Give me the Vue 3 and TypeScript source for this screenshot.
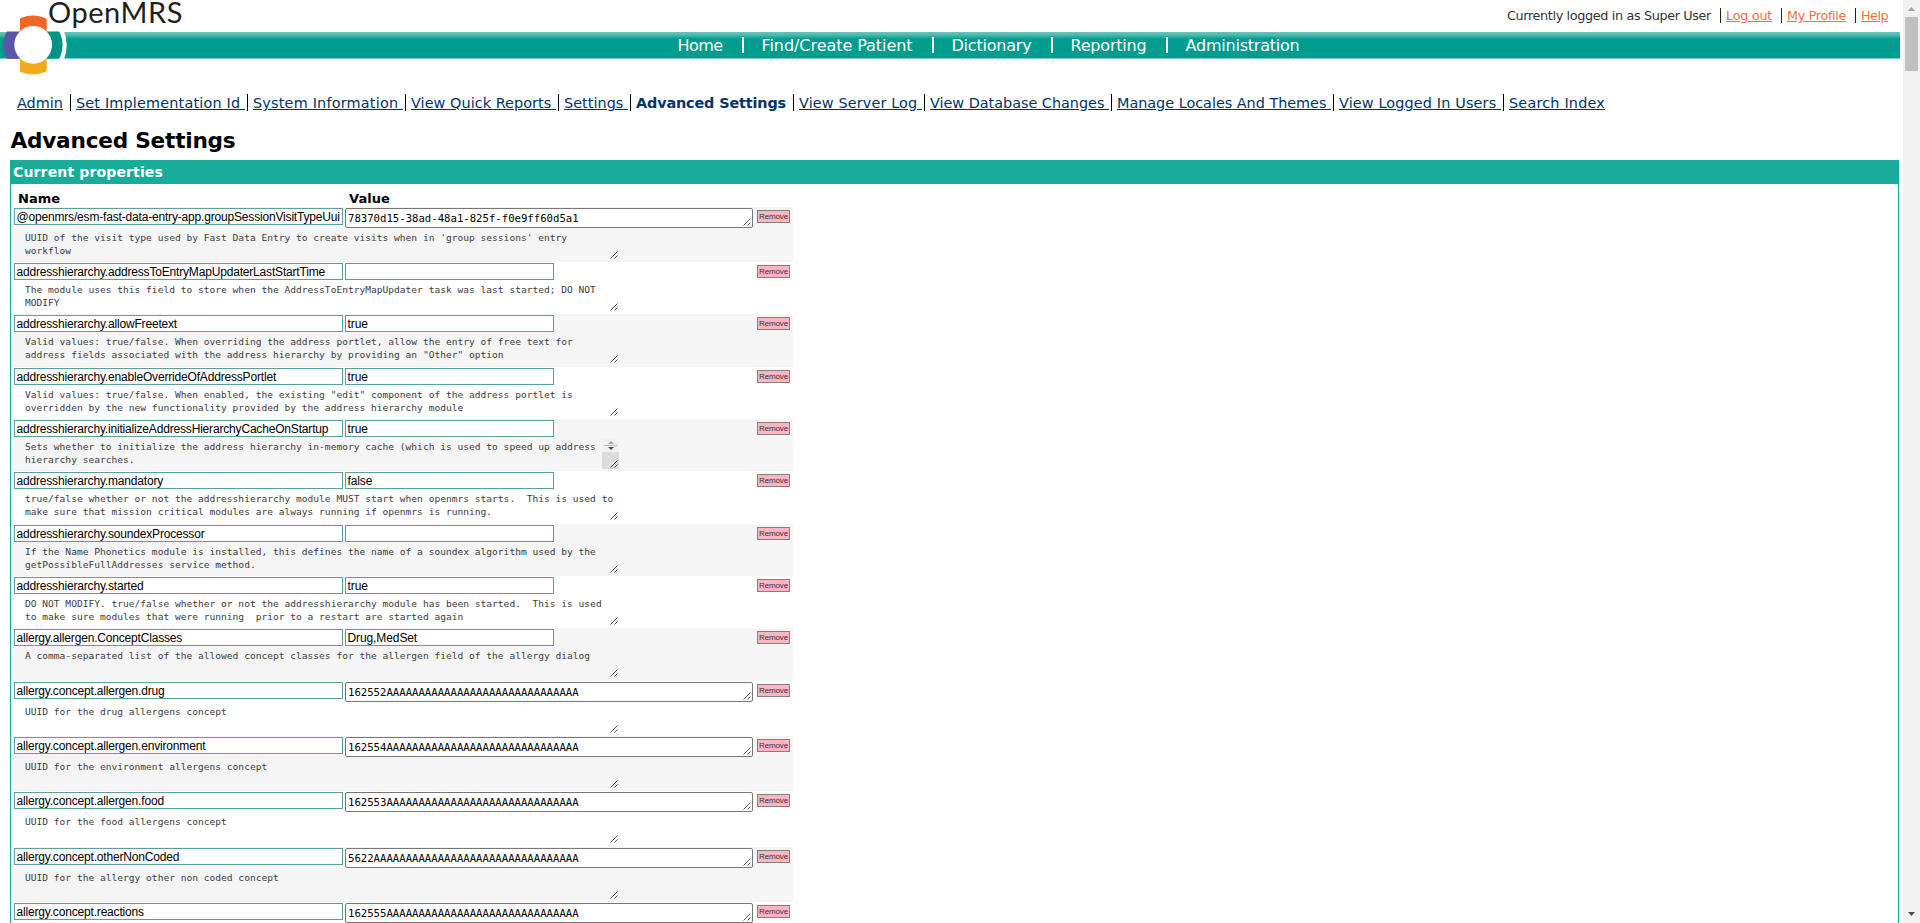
<script setup lang="ts">
interface Label { text: string; width: number }
interface Tab extends Label { spaced?: boolean; current?: boolean }
interface Property {
  name: string
  value: string
  long?: boolean
  description: string[]
  height: number
  scroll?: boolean
}

// Spreads a label evenly over the given width by adjusting its letter spacing.
const vFit = {
  mounted(el: HTMLElement, binding: { value: number }) {
    const natural = el.getBoundingClientRect().width
    const count = (el.textContent ?? '').length
    if (count > 0) el.style.letterSpacing = `${(binding.value - natural) / count}px`
  },
}

const account: Label[] = [
  { text: 'Log out', width: 46 },
  { text: 'My Profile', width: 59 },
  { text: 'Help', width: 27 },
]

const navigation: Label[] = [
  { text: 'Home', width: 45 },
  { text: 'Find/Create Patient', width: 151 },
  { text: 'Dictionary', width: 80 },
  { text: 'Reporting', width: 76 },
  { text: 'Administration', width: 114 },
]

const tabs: Tab[] = [
  { text: 'Admin', width: 46, spaced: true },
  { text: 'Set Implementation Id\u00a0', width: 169 },
  { text: 'System Information\u00a0', width: 150 },
  { text: 'View Quick Reports\u00a0', width: 145 },
  { text: 'Settings\u00a0', width: 64 },
  { text: 'Advanced Settings', width: 150, spaced: true, current: true },
  { text: 'View Server Log\u00a0', width: 123 },
  { text: 'View Database Changes\u00a0', width: 179 },
  { text: 'Manage Locales And Themes\u00a0', width: 214 },
  { text: 'View Logged In Users\u00a0', width: 162 },
  { text: 'Search Index', width: 96 },
]

const properties: Property[] = [
  {
    name: '@openmrs/esm-fast-data-entry-app.groupSessionVisitTypeUui',
    value: '78370d15-38ad-48a1-825f-f0e9ff60d5a1', long: true, height: 55,
    description: ["UUID of the visit type used by Fast Data Entry to create visits when in 'group sessions' entry", 'workflow'],
  },
  {
    name: 'addresshierarchy.addressToEntryMapUpdaterLastStartTime', value: '', height: 52,
    description: ['The module uses this field to store when the AddressToEntryMapUpdater task was last started; DO NOT', 'MODIFY'],
  },
  {
    name: 'addresshierarchy.allowFreetext', value: 'true', height: 53,
    description: ['Valid values: true/false. When overriding the address portlet, allow the entry of free text for', 'address fields associated with the address hierarchy by providing an "Other" option'],
  },
  {
    name: 'addresshierarchy.enableOverrideOfAddressPortlet', value: 'true', height: 52,
    description: ['Valid values: true/false. When enabled, the existing "edit" component of the address portlet is', 'overridden by the new functionality provided by the address hierarchy module'],
  },
  {
    name: 'addresshierarchy.initializeAddressHierarchyCacheOnStartup', value: 'true', height: 52, scroll: true,
    description: ['Sets whether to initialize the address hierarchy in-memory cache (which is used to speed up address', 'hierarchy searches.'],
  },
  {
    name: 'addresshierarchy.mandatory', value: 'false', height: 53,
    description: ['true/false whether or not the addresshierarchy module MUST start when openmrs starts.  This is used to', 'make sure that mission critical modules are always running if openmrs is running.'],
  },
  {
    name: 'addresshierarchy.soundexProcessor', value: '', height: 52,
    description: ['If the Name Phonetics module is installed, this defines the name of a soundex algorithm used by the', 'getPossibleFullAddresses service method.'],
  },
  {
    name: 'addresshierarchy.started', value: 'true', height: 52,
    description: ['DO NOT MODIFY. true/false whether or not the addresshierarchy module has been started.  This is used', 'to make sure modules that were running  prior to a restart are started again'],
  },
  {
    name: 'allergy.allergen.ConceptClasses', value: 'Drug,MedSet', height: 53,
    description: ['A comma-separated list of the allowed concept classes for the allergen field of the allergy dialog'],
  },
  { name: 'allergy.concept.allergen.drug', value: '162552AAAAAAAAAAAAAAAAAAAAAAAAAAAAAA', long: true, height: 55, description: ['UUID for the drug allergens concept'] },
  { name: 'allergy.concept.allergen.environment', value: '162554AAAAAAAAAAAAAAAAAAAAAAAAAAAAAA', long: true, height: 55, description: ['UUID for the environment allergens concept'] },
  { name: 'allergy.concept.allergen.food', value: '162553AAAAAAAAAAAAAAAAAAAAAAAAAAAAAA', long: true, height: 56, description: ['UUID for the food allergens concept'] },
  { name: 'allergy.concept.otherNonCoded', value: '5622AAAAAAAAAAAAAAAAAAAAAAAAAAAAAAAA', long: true, height: 55, description: ['UUID for the allergy other non coded concept'] },
  { name: 'allergy.concept.reactions', value: '162555AAAAAAAAAAAAAAAAAAAAAAAAAAAAAA', long: true, height: 55, description: [] },
]
</script>

<template>
  <div class="window">
    <div class="page">
      <header class="banner">
        <div class="account">
          <span v-fit="204">Currently logged in as Super User</span>
          <template v-for="item in account" :key="item.text">
            <i class="rule"></i><a v-fit="item.width">{{ item.text }}</a>
          </template>
        </div>
        <nav class="navbar">
          <template v-for="(item, i) in navigation" :key="item.text">
            <i v-if="i > 0" class="rule"></i><a v-fit="item.width">{{ item.text }}</a>
          </template>
        </nav>
        <svg class="mark" width="70" height="80" viewBox="0 0 70 80">
          <defs><clipPath id="disc"><circle cx="33" cy="45" r="29.6" /></clipPath></defs>
          <path d="M50 31.5 H64 Q69.5 45 64 59.2 H50 Z" fill="#fff" />
          <g clip-path="url(#disc)">
            <rect x="20" y="10" width="26.7" height="28" fill="#f26522" />
            <rect x="20" y="50" width="26.7" height="28" fill="#f0ab18" />
            <rect x="0" y="31.5" width="26" height="27.3" fill="#5b57a6" />
            <rect x="40" y="31.5" width="26" height="27.3" fill="#009384" />
          </g>
          <circle cx="33.2" cy="44.8" r="18.9" fill="#fff" />
        </svg>
        <span class="wordmark" v-fit="135">OpenMRS</span>
      </header>

      <nav class="tabs">
        <template v-for="(tab, i) in tabs" :key="tab.text">
          <i v-if="i > 0" class="rule"></i>
          <a v-fit="tab.width" :class="{ spaced: tab.spaced, current: tab.current }">{{ tab.text }}</a>
        </template>
      </nav>

      <h2><span v-fit="225">Advanced Settings</span></h2>

      <section class="box">
        <div class="box-title"><span v-fit="150">Current properties</span></div>
        <div class="heads"><b><span v-fit="42">Name</span></b><b><span v-fit="41">Value</span></b></div>
        <div
          v-for="(p, i) in properties"
          :key="p.name"
          class="row"
          :class="{ shaded: i % 2 === 0, tall: p.long }"
          :style="{ height: p.height + 'px' }"
        >
          <div class="fields">
            <div class="field name">{{ p.name }}</div>
            <div v-if="p.long" class="area">{{ p.value }}
              <svg class="grip" width="8" height="8" viewBox="0 0 8 8"><path d="M0.5 7.5 L7.5 0.5 M4.5 7.5 L7.5 4.5" /></svg>
            </div>
            <div v-else class="field value">{{ p.value }}</div>
            <button class="remove" type="button"><span v-fit="29">Remove</span></button>
          </div>
          <div class="note">
            <div v-for="line in p.description" :key="line" class="line">{{ line }}</div>
            <svg v-if="p.scroll" class="scroller" width="17" height="30" viewBox="0 0 17 30">
              <rect width="17" height="30" fill="#f1f1f1" />
              <rect y="13" width="17" height="17" fill="#dcdcdc" />
              <path d="M6 5 L9 2 L12 5 Z" fill="#a3a3a3" />
              <path d="M2 6.5 H15" stroke="#b8b8b8" />
              <path d="M6 8 H12 L9 11 Z" fill="#505050" />
            </svg>
            <svg class="grip" width="8" height="8" viewBox="0 0 8 8"><path d="M0.5 7.5 L7.5 0.5 M4.5 7.5 L7.5 4.5" /></svg>
          </div>
        </div>
      </section>
    </div>

    <aside class="scrollbar">
      <svg width="17" height="17" viewBox="0 0 17 17"><path d="M5 11 L8.5 7 L12 11 Z" fill="#a3a3a3" /></svg>
      <div class="thumb"></div>
      <svg class="down" width="17" height="17" viewBox="0 0 17 17"><path d="M5 6 H12 L8.5 10 Z" fill="#505050" /></svg>
    </aside>
  </div>
</template>

<style>
html,
body {
  margin: 0;
  background: #fff;
  overflow: hidden;
}
</style>

<style scoped>
.window {
  display: flex;
  width: 1920px;
  height: 923px;
  overflow: hidden;
  font-family: Verdana, "DejaVu Sans", sans-serif;
  color: #000;
}
.page {
  width: 1903px;
  height: 923px;
  overflow: hidden;
  flex: none;
}
a,
span {
  white-space: pre;
}
.banner {
  position: relative;
  height: 80px;
}
.account {
  display: flex;
  justify-content: flex-end;
  box-sizing: border-box;
  height: 32px;
  padding: 8px 15px 0 0;
  font-size: 12.8px;
  line-height: 16px;
  color: #333;
}
.account .rule {
  width: 1px;
  height: 15px;
  margin: 0 5px 0 9px;
  background: #222;
}
.account a {
  color: #f26f43;
  text-decoration: underline;
}
.navbar {
  display: flex;
  box-sizing: border-box;
  width: 1900px;
  height: 27px;
  padding-left: 677.5px;
  background: linear-gradient(#6ac5ba 0, #4fb9ad 3px, #009d8e 7px, #009d8e 26px, #7fc9c1 26px);
  color: #fff;
  font-size: 16px;
  line-height: 27px;
}
.navbar .rule {
  width: 2px;
  height: 16px;
  margin: 5px 18px 0 19px;
  background: #fff;
}
.mark {
  position: absolute;
  left: 0;
  top: 0;
}
.wordmark {
  position: absolute;
  left: 48px;
  top: 0;
  font: 29px/24px Lato, sans-serif;
  color: #231f20;
}
.tabs {
  display: flex;
  box-sizing: border-box;
  height: 46px;
  padding: 14px 0 0 17px;
  font-size: 14.4px;
  line-height: 18px;
}
.tabs .rule {
  width: 1px;
  height: 17px;
  margin: 0 5px 0 2px;
  background: #000;
}
.tabs a {
  color: #036;
  text-decoration: underline;
}
.tabs .spaced {
  margin-right: 5px;
}
.tabs .current {
  font-weight: bold;
  text-decoration: none;
}
h2 {
  height: 34px;
  margin: 0;
  padding-left: 10.5px;
  font-size: 21.6px;
  line-height: 29px;
}
.box {
  box-sizing: border-box;
  width: 1889px;
  margin-left: 10px;
  border: 1px solid #1aac9b;
  border-top: 0;
}
.box-title {
  height: 24px;
  padding-left: 2px;
  background: #1aac9b;
  color: #fff;
  font-size: 14px;
  font-weight: bold;
  line-height: 24px;
}
.heads {
  display: flex;
  height: 23px;
  padding-left: 7px;
  font-size: 13px;
  line-height: 29px;
}
.heads b {
  flex: none;
  width: 331px;
}
.row {
  box-sizing: border-box;
  width: 780px;
  margin-left: 2px;
  padding: 1px 3px 0 1px;
}
.shaded {
  background: #f5f5f5;
}
.fields {
  display: flex;
  align-items: flex-start;
  height: 17px;
}
.tall .fields {
  height: 20px;
}
.field {
  box-sizing: border-box;
  flex: none;
  height: 17px;
  padding-left: 1.5px;
  border: 1px solid #5f9ea0;
  background: #fff;
  font: 12px/16px "Liberation Sans", Arial, sans-serif;
  letter-spacing: -0.1px;
  white-space: pre;
}
.name {
  width: 329px;
  margin-right: 2px;
  letter-spacing: -0.178px;
}
.value {
  width: 209px;
}
.area {
  position: relative;
  box-sizing: border-box;
  flex: none;
  width: 408px;
  height: 20px;
  padding-left: 2px;
  border: 1px solid #767676;
  border-radius: 2px;
  background: #fff;
  font: 10.65px/19px "DejaVu Sans Mono", monospace;
  white-space: nowrap;
}
.remove {
  box-sizing: border-box;
  width: 33px;
  height: 13px;
  margin: 2px 0 0 auto;
  padding: 0;
  border: 1px solid #808080;
  background: #ffb6c1;
  color: #333;
  font: 8px/10px "Liberation Sans", Arial, sans-serif;
}
.note {
  position: relative;
  height: 32px;
  width: 605px;
  padding: 3px 0 0 11px;
  box-sizing: border-box;
  font: 9.58px/13px "DejaVu Sans Mono", monospace;
  color: #3c3c3c;
}
.line {
  height: 13px;
  white-space: pre;
}
.grip {
  position: absolute;
  right: 1px;
  bottom: 1px;
  fill: none;
  stroke: #444;
  stroke-width: 0.9;
}
.scroller {
  position: absolute;
  right: 0;
  bottom: 0;
}
.scrollbar {
  display: flex;
  flex-direction: column;
  align-items: center;
  width: 17px;
  height: 923px;
  background: #f1f1f1;
}
.scrollbar svg {
  flex: none;
}
.thumb {
  width: 13px;
  height: 54px;
  background: #c1c1c1;
}
.down {
  margin-top: auto;
}
</style>
